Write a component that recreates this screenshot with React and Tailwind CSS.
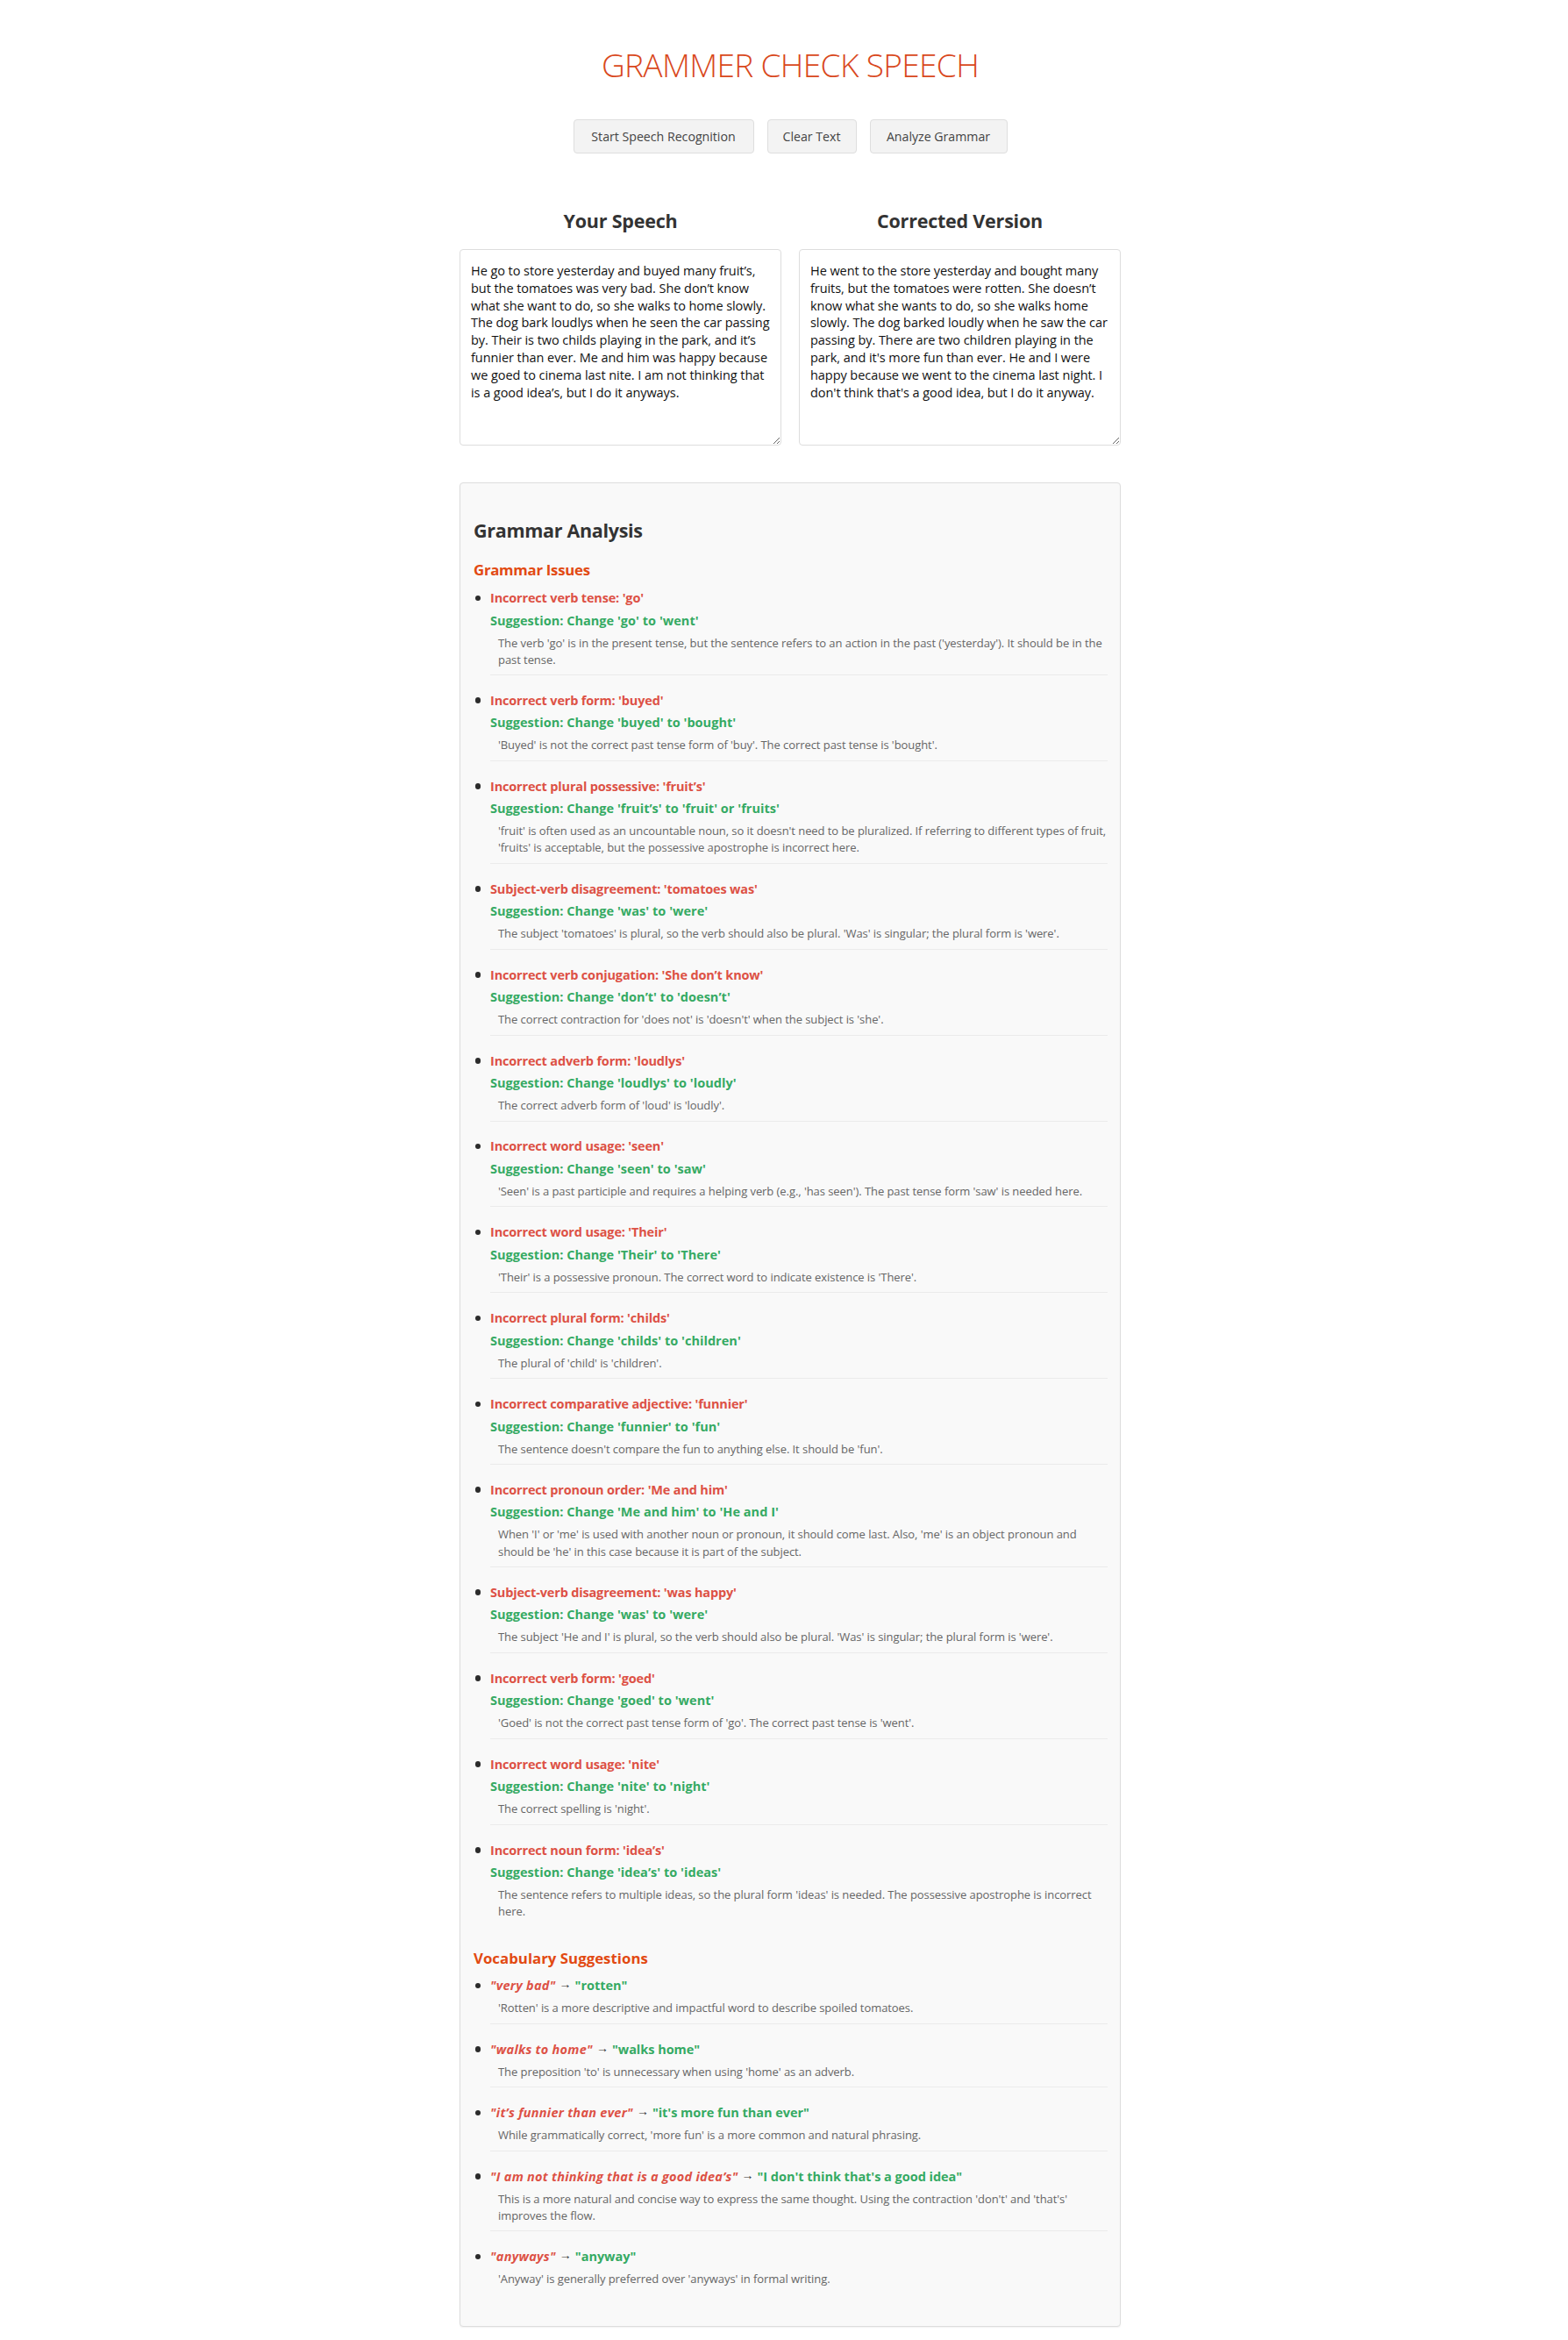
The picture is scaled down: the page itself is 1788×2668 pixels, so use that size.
const issues = [
  ["Incorrect verb tense: 'go'", "Change 'go' to 'went'", ["The verb 'go' is in the present tense, but the sentence refers to an action in the past ('yesterday'). It should be in the", "past tense."]],
  ["Incorrect verb form: 'buyed'", "Change 'buyed' to 'bought'", ["'Buyed' is not the correct past tense form of 'buy'. The correct past tense is 'bought'."]],
  ["Incorrect plural possessive: 'fruit’s'", "Change 'fruit’s' to 'fruit' or 'fruits'", ["'fruit' is often used as an uncountable noun, so it doesn't need to be pluralized. If referring to different types of fruit,", "'fruits' is acceptable, but the possessive apostrophe is incorrect here."]],
  ["Subject-verb disagreement: 'tomatoes was'", "Change 'was' to 'were'", ["The subject 'tomatoes' is plural, so the verb should also be plural. 'Was' is singular; the plural form is 'were'."]],
  ["Incorrect verb conjugation: 'She don’t know'", "Change 'don’t' to 'doesn’t'", ["The correct contraction for 'does not' is 'doesn't' when the subject is 'she'."]],
  ["Incorrect adverb form: 'loudlys'", "Change 'loudlys' to 'loudly'", ["The correct adverb form of 'loud' is 'loudly'."]],
  ["Incorrect word usage: 'seen'", "Change 'seen' to 'saw'", ["'Seen' is a past participle and requires a helping verb (e.g., 'has seen'). The past tense form 'saw' is needed here."]],
  ["Incorrect word usage: 'Their'", "Change 'Their' to 'There'", ["'Their' is a possessive pronoun. The correct word to indicate existence is 'There'."]],
  ["Incorrect plural form: 'childs'", "Change 'childs' to 'children'", ["The plural of 'child' is 'children'."]],
  ["Incorrect comparative adjective: 'funnier'", "Change 'funnier' to 'fun'", ["The sentence doesn't compare the fun to anything else. It should be 'fun'."]],
  ["Incorrect pronoun order: 'Me and him'", "Change 'Me and him' to 'He and I'", ["When 'I' or 'me' is used with another noun or pronoun, it should come last. Also, 'me' is an object pronoun and", "should be 'he' in this case because it is part of the subject."]],
  ["Subject-verb disagreement: 'was happy'", "Change 'was' to 'were'", ["The subject 'He and I' is plural, so the verb should also be plural. 'Was' is singular; the plural form is 'were'."]],
  ["Incorrect verb form: 'goed'", "Change 'goed' to 'went'", ["'Goed' is not the correct past tense form of 'go'. The correct past tense is 'went'."]],
  ["Incorrect word usage: 'nite'", "Change 'nite' to 'night'", ["The correct spelling is 'night'."]],
  ["Incorrect noun form: 'idea’s'", "Change 'idea’s' to 'ideas'", ["The sentence refers to multiple ideas, so the plural form 'ideas' is needed. The possessive apostrophe is incorrect", "here."]],
];

const vocabulary = [
  ["very bad", "rotten", ["'Rotten' is a more descriptive and impactful word to describe spoiled tomatoes."]],
  ["walks to home", "walks home", ["The preposition 'to' is unnecessary when using 'home' as an adverb."]],
  ["it’s funnier than ever", "it's more fun than ever", ["While grammatically correct, 'more fun' is a more common and natural phrasing."]],
  ["I am not thinking that is a good idea’s", "I don't think that's a good idea", ["This is a more natural and concise way to express the same thought. Using the contraction 'don't' and 'that's'", "improves the flow."]],
  ["anyways", "anyway", ["'Anyway' is generally preferred over 'anyways' in formal writing."]],
];

const speech = `He go to store yesterday and buyed many fruit’s,
but the tomatoes was very bad. She don’t know
what she want to do, so she walks to home slowly.
The dog bark loudlys when he seen the car passing
by. Their is two childs playing in the park, and it’s
funnier than ever. Me and him was happy because
we goed to cinema last nite. I am not thinking that
is a good idea’s, but I do it anyways.`;

const corrected = `He went to the store yesterday and bought many
fruits, but the tomatoes were rotten. She doesn’t
know what she wants to do, so she walks home
slowly. The dog barked loudly when he saw the car
passing by. There are two children playing in the
park, and it's more fun than ever. He and I were
happy because we went to the cinema last night. I
don't think that's a good idea, but I do it anyway.`;

function Button({ children, className }) {
  return (
    <button className={`h-[39px] rounded-[4px] border border-[#dedede] bg-[#f3f3f3] text-[14.2px] tracking-[-0.02px] whitespace-nowrap text-[#444] ${className}`}>
      {children}
    </button>
  );
}

function TextPanel({ title, value }) {
  return (
    <div className="flex w-[367px] flex-col">
      <h2 className="text-center text-[21.5px] leading-[30px] font-bold tracking-[-0.22px] text-[#333]">{title}</h2>
      <textarea
        readOnly
        defaultValue={value}
        className="mt-[17px] h-[224px] w-full resize overflow-hidden rounded-[4px] border border-[#ddd] bg-white px-3 pt-[14px] text-[14.5px] leading-[19.8px] tracking-[-0.06px] whitespace-pre text-[#111]"
      />
    </div>
  );
}

function Item({ head, lines, last, gap }) {
  return (
    <li className={`flex ${last ? "" : "mb-[15.9px]"}`}>
      <div className="flex h-[25.5px] w-[19px] shrink-0 items-center">
        <span className="ml-[1.5px] size-[6.5px] rounded-full bg-[#2c2c2c]" />
      </div>
      <div className={`grow pb-[7.4px] ${last ? "" : "border-b border-[#ebebeb]"}`}>
        {head}
        <div className={`pl-[9px] text-[13px] leading-[19.1px] tracking-[-0.065px] whitespace-nowrap text-[#666] ${gap}`}>
          {lines.map((line) => (
            <p key={line}>{line}</p>
          ))}
        </div>
      </div>
    </li>
  );
}

export default function App() {
  return (
    <div className="flex h-[2668px] w-full flex-col items-center bg-white pl-[14px] font-['Open_Sans','Noto_Sans',sans-serif]">
      <h1 className="mt-[44px] text-[37px] leading-[60px] font-light tracking-[-0.65px] text-[#d9481c]">GRAMMER CHECK SPEECH</h1>
      <div className="mt-[32px] flex gap-[15px]">
        <Button className="w-[206px]">Start Speech Recognition</Button>
        <Button className="w-[102px]">Clear Text</Button>
        <Button className="w-[157px]">Analyze Grammar</Button>
      </div>
      <div className="mt-[62px] flex w-[754px] justify-between">
        <TextPanel title="Your Speech" value={speech} />
        <TextPanel title="Corrected Version" value={corrected} />
      </div>
      <section className="mt-[42px] h-[2103px] w-[754px] rounded-[4px] border border-[#ddd] bg-[#f9f9f9] pt-[39px] pr-[14px] pl-[15px] shadow-[0_1px_2px_rgba(0,0,0,0.06)]">
        <h2 className="text-[21.5px] leading-[30px] font-bold tracking-[-0.3px] text-[#333]">Grammar Analysis</h2>
        <h3 className="mt-[18px] text-[16.8px] leading-[24px] font-bold tracking-[-0.27px] text-[#e24a12]">Grammar Issues</h3>
        <ul className="mt-[7px]">
          {issues.map(([title, fix, lines], i) => (
            <Item
              key={title}
              last={i === issues.length - 1}
              gap="mt-[3.5px]"
              lines={lines}
              head={
                <>
                  <p className="text-[14.5px] leading-[25.5px] font-bold tracking-[-0.17px] text-[#dd5145]">{title}</p>
                  <p className="text-[14.5px] leading-[25.5px] font-bold tracking-[0.03px] text-[#35aa63]">Suggestion: {fix}</p>
                </>
              }
            />
          ))}
        </ul>
        <h3 className="mt-[24.5px] text-[16.8px] leading-[24px] font-bold tracking-[0.03px] text-[#e24a12]">Vocabulary Suggestions</h3>
        <ul className="mt-[6px]">
          {vocabulary.map(([from, to, lines], i) => (
            <Item
              key={from}
              last={i === vocabulary.length - 1}
              gap="mt-[3.6px]"
              lines={lines}
              head={
                <p className="h-[25.5px] text-[14.5px] leading-[25.5px] font-bold text-[#35aa63]">
                  <em className="tracking-[0.26px] text-[#dd5145]">"{from}"</em>
                  <span className="mx-[4px] align-[2px] text-[14px] leading-none font-normal text-[#333]">→</span>
                  <span className="tracking-[-0.03px]">"{to}"</span>
                </p>
              }
            />
          ))}
        </ul>
      </section>
    </div>
  );
}
